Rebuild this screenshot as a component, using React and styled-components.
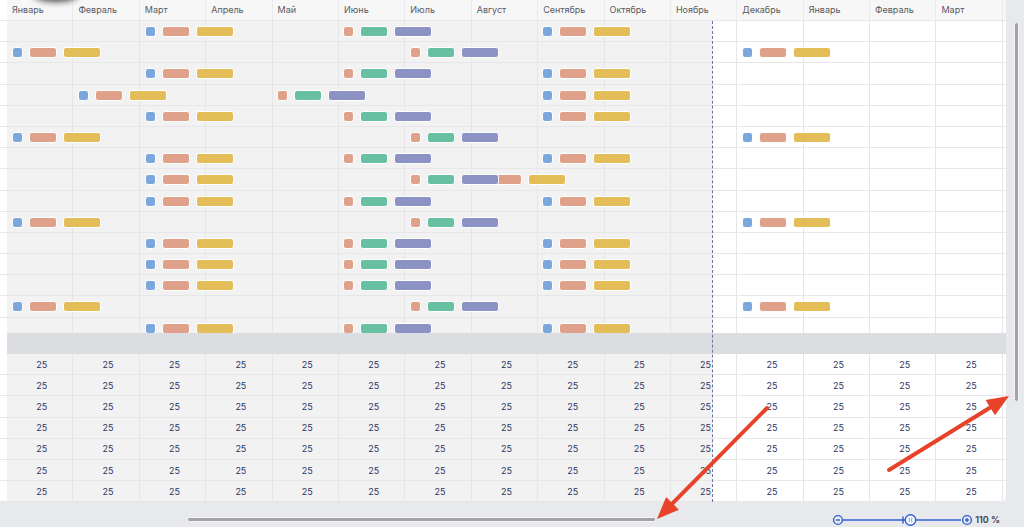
import styled, { createGlobalStyle } from 'styled-components';

const GlobalStyle = createGlobalStyle`
  * { box-sizing: border-box; }
  html, body { margin: 0; padding: 0; background: #e8e9ed; }
  body { font-family: Inter, "Open Sans", "Liberation Sans", sans-serif; }
`

const COL_W = 66.4;
const LEFT = 7;
const TODAY = 712;
const ROW_H = 21.2;

const MONTHS = [
  'Январь', 'Февраль', 'Март', 'Апрель', 'Май', 'Июнь', 'Июль', 'Август',
  'Сентябрь', 'Октябрь', 'Ноябрь', 'Декабрь', 'Январь', 'Февраль', 'Март',
];

const COLS = `${LEFT}px repeat(15, ${COL_W}px) 1fr`;

const A = [{ kind: 'blue', x: 145 }, { kind: 'orange', x: 343 }, { kind: 'blue', x: 542 }];
const B = [{ kind: 'blue', x: 12 }, { kind: 'orange', x: 410 }, { kind: 'blue', x: 742 }];
const C = [{ kind: 'blue', x: 78 }, { kind: 'orange', x: 277 }, { kind: 'blue', x: 542 }];
const D = [{ kind: 'blue', x: 145 }, { kind: 'blue', x: 477 }, { kind: 'orange', x: 410 }];
const ROWS = [A, B, A, C, A, B, A, D, A, B, A, A, A, B, A];

const GROUPS = {
  blue: ['#7ba7dc', '#e0a18a', '#e3bd58'],
  orange: ['#e0a18a', '#68c0a3', '#8d92c4'],
};

const Page = styled.div`
  position: relative;
  width: 1024px;
  height: 527px;
  overflow: hidden;
  display: grid;
  grid-template-columns: 1006px 18px;
  grid-template-rows: 502px 25px;
  background: #e8e9ed;
`

const Panel = styled.div`
  position: relative;
  display: flex;
  flex-direction: column;
  background: #fff;
  border-bottom-right-radius: 6px;
  overflow: hidden;
`

const Row = styled.div`
  display: grid;
  grid-template-columns: ${COLS};
  height: ${p => p.$h}px;
  flex: none;
  border-bottom: 1px solid #e7e7e9;
  background: ${p => p.$bg};
  position: relative;
`

const HeaderCell = styled.div`
  border-right: 1px solid #ebebed;
  padding: 4px 0 0 5px;
  font-size: 9px;
  color: #5a5a60;
  white-space: nowrap;
`

const Cell = styled.div`
  border-right: 1px solid #e6e6e8;
  display: flex;
  align-items: center;
  justify-content: center;
  padding-left: 4px;
  font-size: 9px;
  color: #2e3463;
`

const Blank = styled.div``

const GanttBody = styled.div`
  height: 312px;
  overflow: hidden;
  flex: none;
`

const Band = styled.div`
  height: 21px;
  flex: none;
  background: linear-gradient(to right, #fff ${LEFT}px, #dcdde1 ${LEFT}px);
`

const Bar = styled.div`
  position: absolute;
  top: 5px;
  height: 11px;
  border: 1px solid #fff;
  border-radius: 3px;
  background: ${p => p.$c};
`

const TodayLine = styled.div`
  position: absolute;
  left: ${TODAY}px;
  top: 21px;
  bottom: 0;
  border-left: 1.5px dashed #6e7298;
`

const TopShadow = styled.div`
  position: absolute;
  left: 34px;
  top: -12px;
  width: 44px;
  height: 14px;
  border-radius: 50%;
  background: rgba(40, 40, 45, 0.8);
  filter: blur(3px);
`

const VGutter = styled.div`
  padding: 22px 0 0 8px;
`

const VThumb = styled.div`
  width: 5px;
  height: 380px;
  border-radius: 3px;
  background: #a3a3a6;
  border: 1px solid #f4f4f4;
`

const BottomBar = styled.div`
  display: flex;
  align-items: center;
  padding: 10px 6px 0 187px;
`

const HThumb = styled.div`
  width: 469px;
  height: 5px;
  border-radius: 3px;
  background: #a3a3a6;
  border: 1px solid #f4f4f4;
`

const Zoom = styled.div`
  margin-left: auto;
  display: flex;
  align-items: center;
`

const ZoomText = styled.span`
  font-size: 9px;
  font-weight: 600;
  color: #3d3d48;
  margin-left: 2px;
`

const Overlay = styled.svg`
  position: absolute;
  left: 0;
  top: 0;
  pointer-events: none;
`

const rowBg = `linear-gradient(to right, #fff ${LEFT}px, #f2f2f2 ${LEFT}px, #f2f2f2 ${TODAY}px, #fff ${TODAY}px)`;

const Group = ({ kind, x }) => {
  const [c1, c2, c3] = GROUPS[kind];
  return (
    <>
      <Bar $c={c1} style={{ left: x, width: 11 }} />
      <Bar $c={c2} style={{ left: x + 17, width: 28 }} />
      <Bar $c={c3} style={{ left: x + 51, width: 38 }} />
    </>
  );
};

const EmptyCells = () => (
  <>
    <Blank />
    {MONTHS.map((m, i) => <Cell key={i} />)}
    <Blank />
  </>
);

// slider track runs from the minus button to the plus button, knob at 110 %
const ZoomSlider = () => (
  <svg width="128" height="14" viewBox="0 0 128 14">
    <g fill="none" stroke="#2f5fd0" strokeWidth="1.4">
      <circle cx="5" cy="7" r="4.4" />
      <line x1="3" y1="7" x2="7" y2="7" />
      <line x1="10" y1="7" x2="72" y2="7" />
      <line x1="70" y1="3.5" x2="70" y2="10.5" />
      <circle cx="77.5" cy="7" r="5.2" fill="#fff" />
      <line x1="76.2" y1="4.5" x2="76.2" y2="9.5" strokeWidth="0.7" />
      <line x1="78.8" y1="4.5" x2="78.8" y2="9.5" strokeWidth="0.7" />
      <line x1="82.7" y1="7" x2="128" y2="7" />
    </g>
  </svg>
);

const PlusIcon = () => (
  <svg width="12" height="12" viewBox="0 0 12 12">
    <g fill="none" stroke="#2f5fd0" strokeWidth="1.4">
      <circle cx="6" cy="6" r="4.4" />
      <line x1="4" y1="6" x2="8" y2="6" />
      <line x1="6" y1="4" x2="6" y2="8" />
    </g>
  </svg>
);

const Arrow = ({ x1, y1, x2, y2 }) => {
  const a = Math.atan2(y2 - y1, x2 - x1);
  const len = 22;
  const half = 9;
  const bx = x2 - len * Math.cos(a);
  const by = y2 - len * Math.sin(a);
  const px = -Math.sin(a) * half;
  const py = Math.cos(a) * half;
  return (
    <g>
      <line x1={x1} y1={y1} x2={bx} y2={by} stroke="#e8432a" strokeWidth="4" strokeLinecap="round" />
      <polygon points={`${x2},${y2} ${bx + px},${by + py} ${bx - px},${by - py}`} fill="#e8432a" />
    </g>
  );
};

const App = () => {
  return (
    <Page>
      <GlobalStyle />
      <Panel>
        <Row $h={21} $bg={`linear-gradient(to right, #fff ${LEFT}px, #f7f7f8 ${LEFT}px)`}>
          <Blank />
          {MONTHS.map((m, i) => <HeaderCell key={i}>{m}</HeaderCell>)}
          <Blank />
        </Row>
        <GanttBody>
          {ROWS.map((groups, r) => (
            <Row key={r} $h={ROW_H} $bg={rowBg}>
              <EmptyCells />
              {groups.map((g, i) => <Group key={i} kind={g.kind} x={g.x} />)}
            </Row>
          ))}
        </GanttBody>
        <Band />
        {Array.from({ length: 7 }).map((_, r) => (
          <Row key={r} $h={ROW_H} $bg={rowBg}>
            <Blank />
            {MONTHS.map((m, i) => <Cell key={i}>25</Cell>)}
            <Blank />
          </Row>
        ))}
        <TodayLine />
        <TopShadow />
      </Panel>
      <VGutter>
        <VThumb />
      </VGutter>
      <BottomBar>
        <HThumb />
        <Zoom>
          <ZoomSlider />
          <PlusIcon />
          <ZoomText>110 %</ZoomText>
        </Zoom>
      </BottomBar>
      <Overlay width="1024" height="527">
        <Arrow x1={767} y1={408} x2={657} y2={519} />
        <Arrow x1={889} y1={470} x2={1009} y2={396} />
      </Overlay>
    </Page>
  );
};

export default App;
